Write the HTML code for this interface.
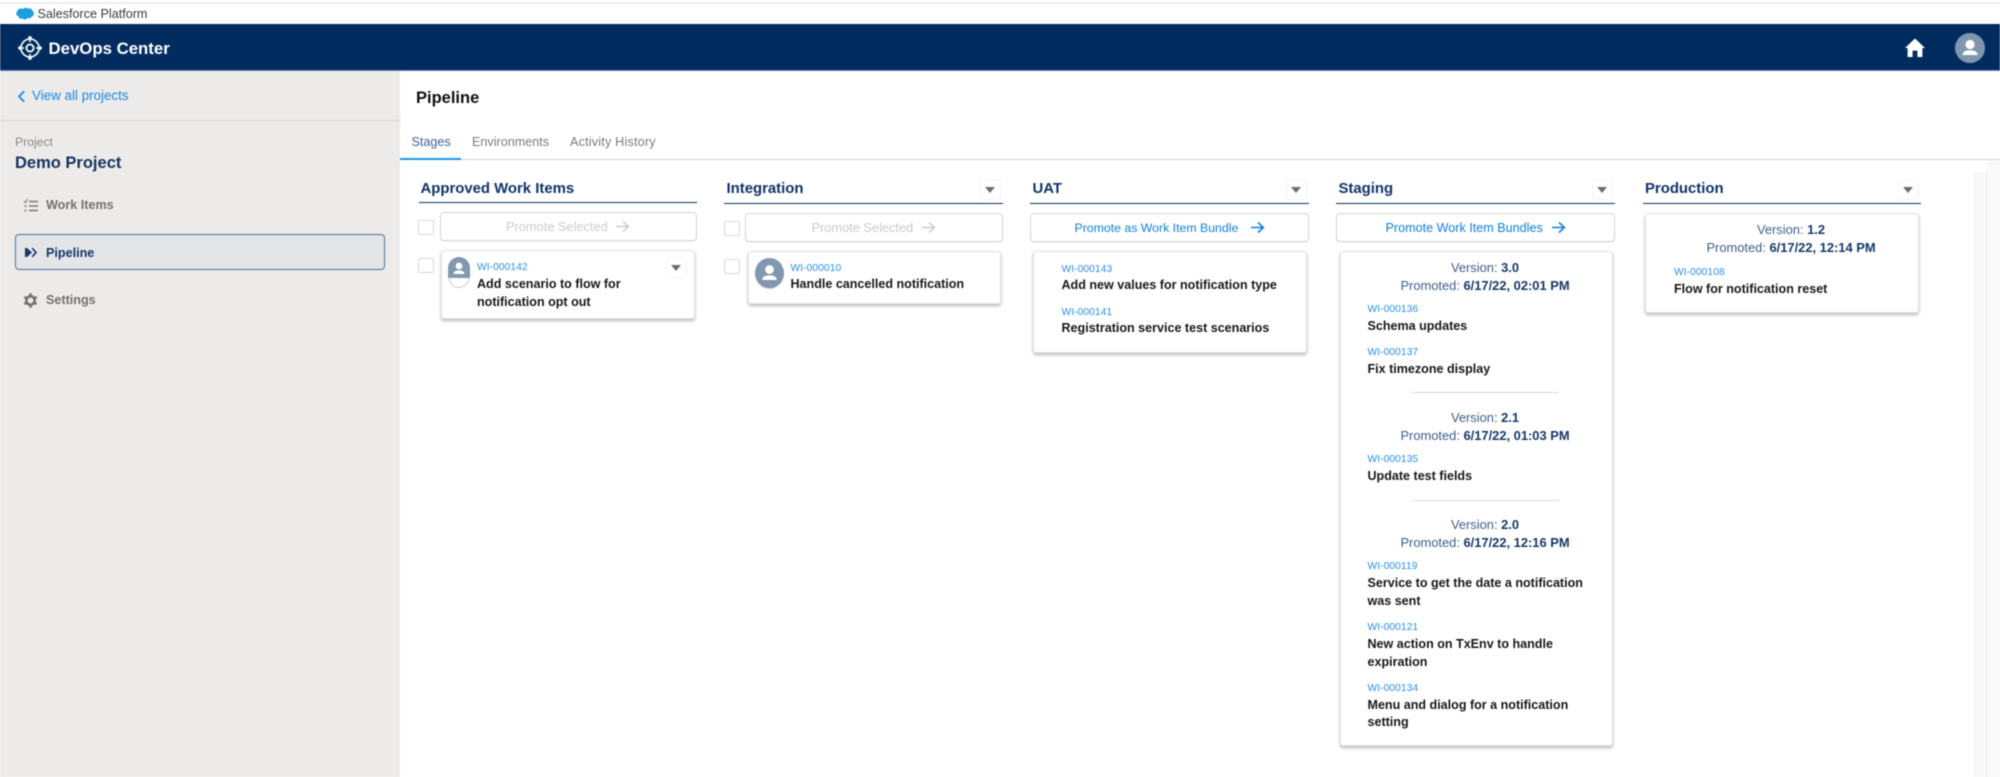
<!DOCTYPE html>
<html><head><meta charset="utf-8"><style>
html,body{margin:0;padding:0;background:#fff;width:2000px;height:777px;overflow:hidden}
#r{position:relative;width:2000px;height:777px;overflow:hidden;font-family:"Liberation Sans",sans-serif;filter:blur(.55px)}
#r div,#r svg{position:absolute}
.t{white-space:nowrap;line-height:20px;height:20px}
.wi{font-size:10.2px;color:#2a8fe6;letter-spacing:.1px;margin-top:1px}
.ti{font-size:12.55px;font-weight:700;color:#181818}
.h{font-size:14.9px;font-weight:700;color:#0f3468;margin-top:1px}
.ver{font-size:12.9px;color:#40608c;text-align:center;width:260px}
.ver b{color:#16386a}
.ln{height:1px;background:#0d2f62}
.cb{width:16px;height:15px;border:1px solid #d8d8d8;border-radius:2px;background:#fff;box-sizing:border-box}
.btn{border:1px solid #d5d5d5;border-radius:4px;background:#fff;box-sizing:border-box;box-shadow:0 1px 1px rgba(0,0,0,.06)}
.card{background:#fff;border:1px solid #e2e2e2;border-radius:3px;box-sizing:border-box;box-shadow:0 2px 3px rgba(0,0,0,.28)}
.dd{width:21px;height:21px;border:1px solid #f3f3f3;border-radius:3px;background:#fff;box-sizing:border-box}
.dd i{position:absolute;left:4px;top:7px;width:0;height:0;border-left:5px solid transparent;border-right:5px solid transparent;border-top:6px solid #706e6b}
.sep{height:1px;background:#d9d9d9}
.pr{font-size:12.8px;color:#cbcbcb}
.pb{font-size:12.3px;color:#1180dc}
.tab{font-size:12.6px;color:#7b7b7b}
.nav{font-size:12.6px;font-weight:700;color:#737270}
</style></head><body><div id="r">

<div style="left:0;top:2px;width:2000px;height:1.5px;background:#ececec"></div>
<svg style="left:15px;top:7px" width="19" height="15" viewBox="0 0 19 14" preserveAspectRatio="none"><path d="M8 2 C9 .5 11.5 .3 12.6 1.6 C14.5 .8 17 1.6 17.6 3.6 C19.4 4.6 19.3 8.2 16.8 8.9 C16.2 10.6 13.6 11 12.4 10 C11.5 12 8.6 12.2 7.8 10.6 C6 11.6 3.6 10.6 3.6 8.8 C1.2 8.4 .4 5.4 2.4 4 C2.2 2 5.8 .4 8 2Z" fill="#1b9ee0"/></svg>
<div class="t" style="left:37.5px;top:4px;font-size:12.6px;color:#3c3c3c">Salesforce Platform</div>

<div style="left:0;top:24px;width:2000px;height:46px;background:#022c60"></div>
<div style="left:0;top:70px;width:2000px;height:1px;background:#6e86a6"></div>
<svg style="left:17px;top:35px" width="26" height="26" viewBox="0 0 26 26" fill="none" stroke="#fff"><circle cx="13" cy="13" r="9" stroke-width="1.6"/><circle cx="13" cy="13" r="3.6" stroke-width="1.8"/><path d="M13 1v6M13 19v6M1 13h6M19 13h6" stroke-width="1.6"/><path d="M11 2.5h4M11 23.5h4M2.5 11v4M23.5 11v4" stroke-width="1.2"/></svg>
<div class="t" style="left:48.5px;top:38.5px;font-size:16.8px;font-weight:700;color:#fff">DevOps Center</div>
<svg style="left:1904px;top:37px" width="22" height="22" viewBox="0 0 22 22"><path d="M11 1.5 L21 11 H18.4 V20 H13.4 V13.6 H8.6 V20 H3.6 V11 H1Z" fill="#fff"/></svg>
<div style="left:1955px;top:33px;width:30px;height:30px;border-radius:50%;background:#7f96ae"></div>
<svg style="left:1955px;top:33px" width="30" height="30" viewBox="0 0 30 30"><circle cx="15" cy="11.5" r="4.6" fill="#fff"/><path d="M7.5 22 C7.5 18.5 11 17.2 15 17.2 S22.5 18.5 22.5 22 Z" fill="#fff"/></svg>

<!-- Sidebar -->
<div style="left:0;top:71px;width:400px;height:706px;background:#ecebea"></div>
<div style="left:0;top:120px;width:400px;height:1px;background:#d6d5d3"></div>
<svg style="left:17px;top:90px" width="9" height="13" viewBox="0 0 9 13"><path d="M7.2 1.2 L2 6.5 L7.2 11.8" fill="none" stroke="#1b8ae6" stroke-width="1.8"/></svg>
<div class="t" style="left:32px;top:86px;font-size:13.4px;color:#1b8ae6">View all projects</div>
<div class="t" style="left:15px;top:132px;font-size:12.2px;color:#8a8987">Project</div>
<div class="t" style="left:15px;top:153px;font-size:16.5px;font-weight:700;color:#16325c">Demo Project</div>

<svg style="left:23px;top:198px" width="16" height="15" viewBox="0 0 16 15" fill="none" stroke="#7a7977" stroke-width="1.4"><path d="M6 3.5h9M6 8h9M6 12.5h9M1.4 8h2M1.4 12.5h2"/><path d="M1 3 L2.4 4.6 L4.6 1" stroke-width="1.1"/></svg>
<div class="t nav" style="left:46px;top:195px">Work Items</div>

<div style="left:15px;top:234px;width:370px;height:36px;box-sizing:border-box;border:1.3px solid #4c739f;border-radius:4px;background:#e4e5e6"></div>
<svg style="left:24px;top:246px" width="13" height="13" viewBox="0 0 13 13"><path d="M1 2 H3 L8 6.5 L3 11 H1Z" fill="#16386a"/><path d="M8.2 2.2 L12 6.5 L8.2 10.8" fill="none" stroke="#16386a" stroke-width="1.6"/></svg>
<div class="t nav" style="left:46px;top:243px;color:#16386a">Pipeline</div>

<svg style="left:23px;top:293px" width="15" height="15" viewBox="0 0 15 15" fill="none" stroke="#747371"><circle cx="7.5" cy="7.5" r="4.2" stroke-width="2.6"/><path d="M7.5 .3v2.6M7.5 12.1v2.6M1.3 3.9l2.2 1.3M11.5 9.8l2.2 1.3M1.3 11.1l2.2-1.3M11.5 5.2l2.2-1.3" stroke-width="2.4"/></svg>
<div class="t nav" style="left:46px;top:290px">Settings</div>

<!-- Main head -->
<div class="t" style="left:416px;top:88px;font-size:16.5px;font-weight:700;color:#111">Pipeline</div>
<div class="t tab" style="left:411.5px;top:132px;color:#3f6390">Stages</div>
<div class="t tab" style="left:472px;top:132px">Environments</div>
<div class="t tab" style="left:570px;top:132px;letter-spacing:.2px">Activity History</div>
<div style="left:400px;top:159px;width:1600px;height:1px;background:#d4d4d4"></div>
<div style="left:400px;top:158px;width:61px;height:2px;background:#1b96f0"></div>

<div style="left:1974px;top:172px;width:13px;height:605px;background:#f8f8f8;border-left:1px solid #f1f1f1;border-right:1px solid #eee;box-sizing:border-box"></div>
<div style="left:1987px;top:160px;width:13px;height:617px;background:#f9f9f9"></div>

<!-- Column 1 -->
<div class="t h" style="left:420.5px;top:178px">Approved Work Items</div>
<div class="ln" style="left:418.5px;top:202px;width:278px"></div>
<div class="cb" style="left:418px;top:220px"></div>
<div class="btn" style="left:439.5px;top:212px;width:257px;height:29px"></div>
<div class="t pr" style="left:506px;top:217px">Promote Selected</div>
<svg style="left:615px;top:220px" width="15" height="13" viewBox="0 0 15 13"><path d="M1 6.5H13M8 1.5L13.4 6.5L8 11.5" fill="none" stroke="#cbcbcb" stroke-width="1.5"/></svg>
<div class="cb" style="left:418px;top:258px"></div>
<div class="card" style="left:441px;top:250px;width:254px;height:69px"></div>
<div style="left:448px;top:257px;width:22px;height:31px;border-radius:11px/13px;border:1px solid #c9ced4;box-sizing:border-box;background:#fff"></div>
<div style="left:448px;top:257px;width:22px;height:21px;border-radius:11px 11px 0 0;background:#8198b0"></div>
<svg style="left:448px;top:257px" width="22" height="22" viewBox="0 0 22 22"><circle cx="11" cy="9" r="3.4" fill="#fff"/><path d="M5.5 17 C5.5 14.4 8 13.4 11 13.4 S16.5 14.4 16.5 17Z" fill="#fff"/></svg>
<div class="t wi" style="left:477px;top:257px">WI-000142</div>
<div class="t ti" style="left:477px;top:273.5px">Add scenario to flow for</div>
<div class="t ti" style="left:477px;top:291.5px">notification opt out</div>
<div class="dd" style="left:666px;top:257px"><i></i></div>

<!-- Column 2 -->
<div class="t h" style="left:726.5px;top:178px">Integration</div>
<div class="ln" style="left:724px;top:203px;width:278.5px"></div>
<div class="dd" style="left:979.5px;top:179px"><i></i></div>
<div class="cb" style="left:724px;top:221px"></div>
<div class="btn" style="left:745px;top:213px;width:257.5px;height:29px"></div>
<div class="t pr" style="left:811.5px;top:218px">Promote Selected</div>
<svg style="left:921px;top:221px" width="15" height="13" viewBox="0 0 15 13"><path d="M1 6.5H13M8 1.5L13.4 6.5L8 11.5" fill="none" stroke="#cbcbcb" stroke-width="1.5"/></svg>
<div class="cb" style="left:724px;top:259px"></div>
<div class="card" style="left:748px;top:250.5px;width:253px;height:53px"></div>
<div style="left:755px;top:258px;width:29px;height:30px;border-radius:50%;background:#8198b0;box-shadow:0 1px 0 #c9ced4"></div>
<svg style="left:755px;top:258px" width="29" height="30" viewBox="0 0 29 30"><circle cx="14.5" cy="11.5" r="4.4" fill="#fff"/><path d="M7.2 22 C7.2 18.6 10.6 17.4 14.5 17.4 S21.8 18.6 21.8 22Z" fill="#fff"/></svg>
<div class="t wi" style="left:790.5px;top:258px">WI-000010</div>
<div class="t ti" style="left:790.5px;top:274px">Handle cancelled notification</div>

<!-- Column 3 -->
<div class="t h" style="left:1032.5px;top:178px">UAT</div>
<div class="ln" style="left:1030px;top:203px;width:278.5px"></div>
<div class="dd" style="left:1285.5px;top:179px"><i></i></div>
<div class="btn" style="left:1030px;top:212.5px;width:278.5px;height:29px"></div>
<div class="t pb" style="left:1074.5px;top:217.5px">Promote as Work Item Bundle</div>
<svg style="left:1250px;top:221px" width="15" height="13" viewBox="0 0 15 13"><path d="M1 6.5H13M8 1.5L13.4 6.5L8 11.5" fill="none" stroke="#1180dc" stroke-width="1.6"/></svg>
<div class="card" style="left:1033px;top:250.5px;width:273.5px;height:102.5px"></div>
<div class="t wi" style="left:1061.5px;top:258.5px">WI-000143</div>
<div class="t ti" style="left:1061.5px;top:274.5px">Add new values for notification type</div>
<div class="t wi" style="left:1061.5px;top:301.5px">WI-000141</div>
<div class="t ti" style="left:1061.5px;top:317.5px">Registration service test scenarios</div>

<!-- Column 4 -->
<div class="t h" style="left:1338.5px;top:178px">Staging</div>
<div class="ln" style="left:1336px;top:203px;width:278.5px"></div>
<div class="dd" style="left:1591.5px;top:179px"><i></i></div>
<div class="btn" style="left:1336px;top:212.5px;width:278.5px;height:29px"></div>
<div class="t pb" style="left:1385.5px;top:217.5px;font-size:12.6px">Promote Work Item Bundles</div>
<svg style="left:1551px;top:221px" width="15" height="13" viewBox="0 0 15 13"><path d="M1 6.5H13M8 1.5L13.4 6.5L8 11.5" fill="none" stroke="#1180dc" stroke-width="1.6"/></svg>
<div class="card" style="left:1339.5px;top:250.5px;width:273px;height:495.5px"></div>

<div class="t ver" style="left:1355px;top:258px">Version: <b>3.0</b></div>
<div class="t ver" style="left:1355px;top:276px">Promoted: <b>6/17/22, 02:01 PM</b></div>
<div class="t wi" style="left:1367.5px;top:299px">WI-000136</div>
<div class="t ti" style="left:1367.5px;top:316px">Schema updates</div>
<div class="t wi" style="left:1367.5px;top:342px">WI-000137</div>
<div class="t ti" style="left:1367.5px;top:359px">Fix timezone display</div>
<div class="sep" style="left:1411.5px;top:392px;width:147px"></div>
<div class="t ver" style="left:1355px;top:408px">Version: <b>2.1</b></div>
<div class="t ver" style="left:1355px;top:426px">Promoted: <b>6/17/22, 01:03 PM</b></div>
<div class="t wi" style="left:1367.5px;top:449px">WI-000135</div>
<div class="t ti" style="left:1367.5px;top:466px">Update test fields</div>
<div class="sep" style="left:1411.5px;top:500px;width:147px"></div>
<div class="t ver" style="left:1355px;top:515px">Version: <b>2.0</b></div>
<div class="t ver" style="left:1355px;top:533px">Promoted: <b>6/17/22, 12:16 PM</b></div>
<div class="t wi" style="left:1367.5px;top:556px">WI-000119</div>
<div class="t ti" style="left:1367.5px;top:573px">Service to get the date a notification</div>
<div class="t ti" style="left:1367.5px;top:591px">was sent</div>
<div class="t wi" style="left:1367.5px;top:617px">WI-000121</div>
<div class="t ti" style="left:1367.5px;top:634px">New action on TxEnv to handle</div>
<div class="t ti" style="left:1367.5px;top:652px">expiration</div>
<div class="t wi" style="left:1367.5px;top:678px">WI-000134</div>
<div class="t ti" style="left:1367.5px;top:695px">Menu and dialog for a notification</div>
<div class="t ti" style="left:1367.5px;top:712px">setting</div>

<!-- Column 5 -->
<div class="t h" style="left:1645px;top:178px">Production</div>
<div class="ln" style="left:1642.7px;top:203px;width:278px"></div>
<div class="dd" style="left:1897.5px;top:179px"><i></i></div>
<div class="card" style="left:1645px;top:212.5px;width:274px;height:100.5px"></div>
<div class="t ver" style="left:1661px;top:220px">Version: <b>1.2</b></div>
<div class="t ver" style="left:1661px;top:238px">Promoted: <b>6/17/22, 12:14 PM</b></div>
<div class="t wi" style="left:1674px;top:261.5px">WI-000108</div>
<div class="t ti" style="left:1674px;top:278.5px">Flow for notification reset</div>

</div></body></html>
